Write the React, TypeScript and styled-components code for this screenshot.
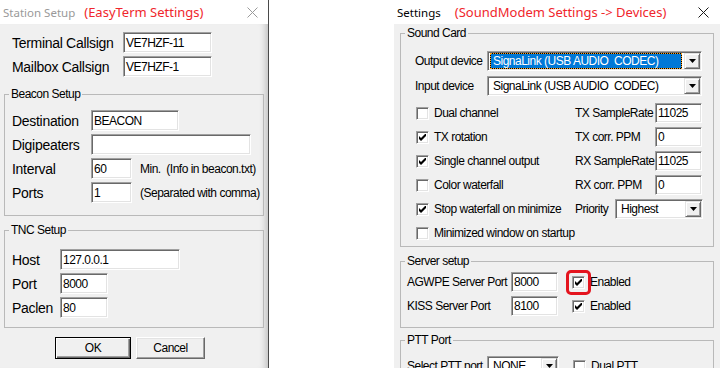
import React from 'react'
import styled, { createGlobalStyle, css } from 'styled-components'

const UI_FONT = `"Liberation Sans", Arial, sans-serif`
const TITLE_FONT = `"Noto Sans", "Open Sans", sans-serif`

// the dialogs use a narrow bitmap font, so tighten Liberation Sans a little
const smallText = css`
  font-size: 12px;
  letter-spacing: -0.5px;
`

const GlobalStyle = createGlobalStyle`
  html, body {
    margin: 0;
    padding: 0;
    background: #fff;
  }
  body {
    font-family: ${UI_FONT};
    color: #000;
  }
  * {
    box-sizing: border-box;
  }
`

const Desktop = styled.div`
  display: flex;
  width: 720px;
  height: 368px;
  overflow: hidden;
  background: #fff;
`

const Window = styled.section<{ $width: number; $edge?: boolean }>`
  display: flex;
  flex-direction: column;
  flex: 0 0 ${p => p.$width}px;
  height: 368px;
  border-right: ${p => (p.$edge ? '1px solid #4a4a4a' : 'none')};
`

const Gap = styled.div`
  flex: 1;
`

const TitleBar = styled.header`
  display: flex;
  align-items: center;
  flex: 0 0 24px;
  padding-left: 3px;
  background: #fff;
`

const Title = styled.span<{ $inactive?: boolean }>`
  font-family: ${TITLE_FONT};
  font-size: 11.5px;
  color: ${p => (p.$inactive ? '#999' : '#000')};
`

const Note = styled.span<{ $gap: number }>`
  margin-left: ${p => p.$gap}px;
  font-family: ${TITLE_FONT};
  font-size: 13px;
  color: #f0262c;
`

const CloseIcon = styled.svg<{ $right: number }>`
  margin-left: auto;
  margin-right: ${p => p.$right}px;
  flex: none;
`

const Body = styled.div<{ $pad: string; $shade?: boolean }>`
  flex: 1;
  display: flex;
  flex-direction: column;
  padding: ${p => p.$pad};
  background: #f0f0f0;
  box-shadow: ${p =>
    p.$shade ? 'inset -8px 0 7px -6px rgba(0, 0, 0, 0.22)' : 'none'};
`

const Row = styled.div<{ $h?: number; $mt?: number; $pl?: number }>`
  display: flex;
  align-items: center;
  height: ${p => p.$h ?? 21}px;
  margin-top: ${p => p.$mt ?? 0}px;
  padding-left: ${p => p.$pl ?? 0}px;
  flex: none;
`

const Label = styled.span<{ $w?: number; $big?: boolean }>`
  flex: none;
  width: ${p => (p.$w ? `${p.$w}px` : 'auto')};
  white-space: pre;
  line-height: 1;
  ${p =>
    p.$big
      ? css`
          font-size: 14px;
          letter-spacing: -0.3px;
        `
      : smallText}
`

const Edit = styled.div<{ $w: number; $h?: number }>`
  flex: none;
  display: flex;
  align-items: center;
  width: ${p => p.$w}px;
  height: ${p => p.$h ?? 21}px;
  padding-left: 2px;
  background: #fff;
  border: 1px solid;
  border-color: #a0a0a0 #fff #fff #a0a0a0;
  box-shadow: inset 1px 1px 0 #696969, inset -1px -1px 0 #e3e3e3;
  line-height: 1;
  white-space: pre;
  ${smallText}
`

const Hint = styled.span`
  margin-left: 8px;
  white-space: pre;
  ${smallText}
`

const Group = styled.fieldset<{ $mt?: number }>`
  margin: ${p => p.$mt ?? 0}px 0 0 0;
  padding: 0;
  min-width: 0;
  border: 1px solid #b9b9b9;
  flex: none;
`

const Legend = styled.legend`
  margin-left: 4px;
  padding: 0 2px;
  line-height: 14px;
  ${smallText}
`

const GroupBody = styled.div<{ $pad: string; $gap?: number }>`
  display: flex;
  flex-direction: column;
  gap: ${p => p.$gap ?? 0}px;
  padding: ${p => p.$pad};
`

const ButtonBar = styled.div`
  display: flex;
  gap: 5px;
  margin: 9px 0 0 51px;
`

const PushButton = styled.div<{ $w: number; $default?: boolean }>`
  display: flex;
  align-items: center;
  justify-content: center;
  width: ${p => p.$w}px;
  height: 22px;
  background: #f0f0f0;
  border: 1px solid;
  border-color: ${p => (p.$default ? '#000' : '#fff #696969 #696969 #fff')};
  box-shadow: ${p =>
    p.$default
      ? 'inset 1px 1px 0 #fff, inset -1px -1px 0 #696969, inset -2px -2px 0 #a0a0a0'
      : 'inset -1px -1px 0 #a0a0a0, inset 1px 1px 0 #e3e3e3'};
  ${smallText}
`

const CheckBox = styled.span<{ $ml?: number }>`
  position: relative;
  flex: none;
  display: grid;
  place-items: center;
  width: 13px;
  height: 13px;
  margin-left: ${p => p.$ml ?? 0}px;
  background: #fff;
  border: 1px solid;
  border-color: #a0a0a0 #fff #fff #a0a0a0;
  box-shadow: inset 1px 1px 0 #696969, inset -1px -1px 0 #e3e3e3;
`

const CheckText = styled.span`
  margin-left: 5px;
  white-space: pre;
  ${smallText}
`

const Highlight = styled.span`
  position: absolute;
  left: -7px;
  top: -7px;
  width: 25px;
  height: 25px;
  border: 3px solid #e4141e;
  border-radius: 5px;
`

const Combo = styled.div<{ $w: number }>`
  flex: none;
  display: flex;
  width: ${p => p.$w}px;
  height: 20px;
  padding: 1px;
  background: #fff;
  border: 1px solid;
  border-color: #a0a0a0 #fff #fff #a0a0a0;
  box-shadow: inset 1px 1px 0 #696969, inset -1px -1px 0 #e3e3e3;
`

const ComboText = styled.div<{ $selected?: boolean }>`
  flex: 1;
  display: flex;
  align-items: center;
  margin: 0 2px 0 1px;
  padding-left: 2px;
  white-space: pre;
  overflow: hidden;
  ${smallText}
  color: ${p => (p.$selected ? '#fff' : '#000')};
  border: 1px ${p => (p.$selected ? 'dotted #ffa21c' : 'solid transparent')};
  background: ${p =>
    p.$selected
      ? 'linear-gradient(#0078d7, #0078d7) padding-box, #000 border-box'
      : 'transparent'};
`

const DropButton = styled.span`
  flex: 0 0 16px;
  display: grid;
  place-items: center;
  background: #f0f0f0;
  border: 1px solid;
  border-color: #e3e3e3 #696969 #696969 #e3e3e3;
  box-shadow: inset 1px 1px 0 #fff, inset -1px -1px 0 #a0a0a0;
`

const OptionRow = styled.div<{ $mt?: number }>`
  display: flex;
  align-items: center;
  height: 20px;
  margin-top: ${p => p.$mt ?? 0}px;
  padding-left: 1px;
`

const OptionLeft = styled.div`
  display: flex;
  align-items: center;
  width: 159px;
  flex: none;
`

const Close = ({ inactive, right }: { inactive?: boolean; right: number }) => (
  <CloseIcon $right={right} width="11" height="11" viewBox="0 0 11 11">
    <path
      d="M0.5 0.5 L10.5 10.5 M10.5 0.5 L0.5 10.5"
      stroke={inactive ? '#9a9a9a' : '#1a1a1a'}
      strokeWidth="1"
      fill="none"
    />
  </CloseIcon>
)

const Check = ({ checked, ml, marked }: { checked?: boolean; ml?: number; marked?: boolean }) => (
  <CheckBox $ml={ml}>
    {checked && (
      <svg width="7" height="7" viewBox="0 0 7 7">
        <path d="M0 2 L2 4 L6 0 L7 0 L7 2 L2 7 L0 5 Z" fill="#000" />
      </svg>
    )}
    {marked && <Highlight />}
  </CheckBox>
)

const Arrow = () => (
  <svg width="7" height="4" viewBox="0 0 7 4">
    <path d="M0 0 H7 L3.5 4 Z" fill="#000" />
  </svg>
)

const Dropdown = ({ w, value, selected }: { w: number; value: string; selected?: boolean }) => (
  <Combo $w={w}>
    <ComboText $selected={selected}>{value}</ComboText>
    <DropButton>
      <Arrow />
    </DropButton>
  </Combo>
)

const options = [
  { text: 'Dual channel', checked: false, side: 'TX SampleRate', value: '11025' },
  { text: 'TX rotation', checked: true, side: 'TX corr. PPM', value: '0' },
  { text: 'Single channel output', checked: true, side: 'RX SampleRate', value: '11025' },
  { text: 'Color waterfall', checked: false, side: 'RX corr. PPM', value: '0' }
]

const StationSetup = () => (
  <Window $width={269} $edge>
    <TitleBar>
      <Title $inactive>Station Setup</Title>
      <Note $gap={9}>(EasyTerm Settings)</Note>
      <Close inactive right={10} />
    </TitleBar>
    <Body $pad="8px 4px 0 4px" $shade>
      <Row $pl={8}>
        <Label $w={111} $big>Terminal Callsign</Label>
        <Edit $w={89}>VE7HZF-11</Edit>
      </Row>
      <Row $pl={8} $mt={3}>
        <Label $w={111} $big>Mailbox Callsign</Label>
        <Edit $w={89}>VE7HZF-1</Edit>
      </Row>

      <Group $mt={10}>
        <Legend>Beacon Setup</Legend>
        <GroupBody $pad="9px 0 12px 7px" $gap={3}>
          <Row>
            <Label $w={79} $big>Destination</Label>
            <Edit $w={88}>BEACON</Edit>
          </Row>
          <Row>
            <Label $w={79} $big>Digipeaters</Label>
            <Edit $w={160} />
          </Row>
          <Row>
            <Label $w={79} $big>Interval</Label>
            <Edit $w={41}>60</Edit>
            <Hint>{'Min.  (Info in beacon.txt)'}</Hint>
          </Row>
          <Row>
            <Label $w={79} $big>Ports</Label>
            <Edit $w={41}>1</Edit>
            <Hint>(Separated with comma)</Hint>
          </Row>
        </GroupBody>
      </Group>

      <Group $mt={7}>
        <Legend>TNC Setup</Legend>
        <GroupBody $pad="12px 0 9px 7px" $gap={3}>
          <Row>
            <Label $w={48} $big>Host</Label>
            <Edit $w={120}>127.0.0.1</Edit>
          </Row>
          <Row>
            <Label $w={48} $big>Port</Label>
            <Edit $w={48}>8000</Edit>
          </Row>
          <Row>
            <Label $w={48} $big>Paclen</Label>
            <Edit $w={48}>80</Edit>
          </Row>
        </GroupBody>
      </Group>

      <ButtonBar>
        <PushButton $w={76} $default>OK</PushButton>
        <PushButton $w={69}>Cancel</PushButton>
      </ButtonBar>
    </Body>
  </Window>
)

const ModemSettings = () => (
  <Window $width={326}>
    <TitleBar>
      <Title>Settings</Title>
      <Note $gap={14}>{'(SoundModem Settings -> Devices)'}</Note>
      <Close right={11} />
    </TitleBar>
    <Body $pad="2px 6px 0 6px">
      <Group>
        <Legend>Sound Card</Legend>
        <GroupBody $pad="11px 10px 3px 14px">
          <Row $h={20}>
            <Label $w={72}>Output device</Label>
            <Dropdown w={215} value="SignaLink (USB AUDIO  CODEC)" selected />
          </Row>
          <Row $h={20} $mt={5}>
            <Label $w={72}>Input device</Label>
            <Dropdown w={215} value="SignaLink (USB AUDIO  CODEC)" />
          </Row>
          {options.map((o, i) => (
            <OptionRow key={o.text} $mt={i === 0 ? 7 : 4}>
              <OptionLeft>
                <Check checked={o.checked} />
                <CheckText>{o.text}</CheckText>
              </OptionLeft>
              <Label $w={80}>{o.side}</Label>
              <Edit $w={47} $h={20}>{o.value}</Edit>
            </OptionRow>
          ))}
          <OptionRow $mt={4}>
            <OptionLeft>
              <Check checked />
              <CheckText>Stop waterfall on minimize</CheckText>
            </OptionLeft>
            <Label $w={40}>Priority</Label>
            <Dropdown w={88} value="Highest" />
          </OptionRow>
          <OptionRow $mt={4}>
            <OptionLeft>
              <Check />
              <CheckText>Minimized window on startup</CheckText>
            </OptionLeft>
          </OptionRow>
        </GroupBody>
      </Group>

      <Group $mt={7}>
        <Legend>Server setup</Legend>
        <GroupBody $pad="4px 0 11px 6px" $gap={4}>
          <Row $h={20}>
            <Label $w={104}>AGWPE Server Port</Label>
            <Edit $w={47} $h={20}>8000</Edit>
            <Check checked ml={14} marked />
            <CheckText>Enabled</CheckText>
          </Row>
          <Row $h={20}>
            <Label $w={104}>KISS Server Port</Label>
            <Edit $w={47} $h={20}>8100</Edit>
            <Check checked ml={14} />
            <CheckText>Enabled</CheckText>
          </Row>
        </GroupBody>
      </Group>

      <Group $mt={5}>
        <Legend>PTT Port</Legend>
        <GroupBody $pad="9px 0 10px 6px">
          <Row $h={20}>
            <Label $w={80}>Select PTT port</Label>
            <Dropdown w={72} value="NONE" />
            <Check ml={14} />
            <CheckText>Dual PTT</CheckText>
          </Row>
        </GroupBody>
      </Group>
    </Body>
  </Window>
)

const App = () => (
  <>
    <GlobalStyle />
    <Desktop>
      <StationSetup />
      <Gap />
      <ModemSettings />
    </Desktop>
  </>
)

export default App
